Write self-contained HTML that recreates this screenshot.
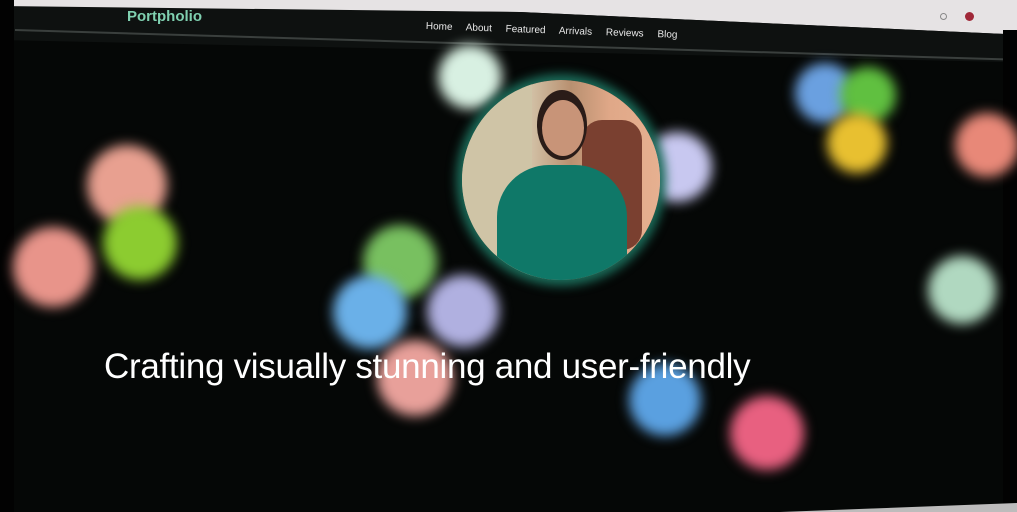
<!DOCTYPE html>
<html><head><style>
html,body{margin:0;padding:0;width:1017px;height:512px;overflow:hidden;background:#050706;font-family:"Liberation Sans",sans-serif}
.strip{position:absolute;left:0;top:0;width:1017px;height:40px;background:#e6e3e4;clip-path:polygon(200px 0,1017px 0,1017px 34px,1005px 34px,520px 12px,0 8px,0 0)}
.hdr{position:absolute;left:0;top:0;width:1017px;height:64px;background:#0e1110;clip-path:polygon(0 6px,520px 12px,1005px 34px,1005px 62px,0 40px)}
.line{position:absolute;left:15px;top:29px;width:990px;height:2px;background:#3a3f3d;transform-origin:0 0;transform:rotate(1.7deg)}
.logo{position:absolute;left:127px;top:8px;color:#7fd0b0;font-weight:bold;font-size:15px}
.nav{position:absolute;left:426px;top:21px;color:#e8e8e8;font-size:10px;transform:rotate(2deg);transform-origin:0 0;word-spacing:11px}
.b{position:absolute;border-radius:50%;filter:blur(6px)}
.av{position:absolute;left:462px;top:80px;width:198px;height:200px;border-radius:50%;overflow:hidden;box-shadow:0 0 10px 6px #1b6a58;background:linear-gradient(90deg,#cfc2a8 0,#d8ccb2 30%,#b89070 55%,#e0a888 75%,#e6b090 100%)}
.h1{position:absolute;left:104px;top:347px;color:#fff;font-size:35px;letter-spacing:-0.3px}
</style></head><body>
<div class="strip"></div>
<div class="hdr"></div>
<div class="line"></div>
<div class="logo">Portpholio</div>
<div class="nav">Home About Featured Arrivals Reviews Blog</div>
<div style="position:absolute;left:965px;top:12px;width:9px;height:9px;border-radius:50%;background:#a02838"></div>
<div style="position:absolute;left:940px;top:13px;width:5px;height:5px;border-radius:50%;border:1px solid #888"></div>
<div style="position:absolute;left:0;top:0;width:14px;height:512px;background:#020202"></div>
<div style="position:absolute;left:1003px;top:30px;width:14px;height:482px;background:#020202"></div>
<div style="position:absolute;left:780px;top:503px;width:237px;height:9px;background:#bdbcbc;clip-path:polygon(0 100%,100% 0,100% 100%)"></div>

<div class="b" style="left:438px;top:45px;width:64px;height:64px;background:#d8f0e2"></div>
<div class="b" style="left:87px;top:145px;width:80px;height:80px;background:#e8a090"></div>
<div class="b" style="left:103px;top:206px;width:74px;height:74px;background:#8ccc30"></div>
<div class="b" style="left:13px;top:227px;width:80px;height:80px;background:#e8948a"></div>
<div class="b" style="left:363px;top:225px;width:74px;height:74px;background:#78c060"></div>
<div class="b" style="left:333px;top:275px;width:74px;height:74px;background:#6ab0e8"></div>
<div class="b" style="left:427px;top:275px;width:72px;height:72px;background:#b0b0e0"></div>
<div class="b" style="left:377px;top:340px;width:76px;height:76px;background:#e8a09a"></div>
<div class="b" style="left:629px;top:364px;width:72px;height:72px;background:#5aa0e0"></div>
<div class="b" style="left:730px;top:396px;width:74px;height:74px;background:#e86080"></div>
<div class="b" style="left:642px;top:132px;width:70px;height:70px;background:#c8c8f0"></div>
<div class="b" style="left:795px;top:63px;width:60px;height:60px;background:#6aa0e0"></div>
<div class="b" style="left:840px;top:67px;width:56px;height:56px;background:#60c040"></div>
<div class="b" style="left:827px;top:113px;width:60px;height:60px;background:#e8c030"></div>
<div class="b" style="left:955px;top:113px;width:64px;height:64px;background:#e88878"></div>
<div class="b" style="left:928px;top:256px;width:68px;height:68px;background:#b0d8c0"></div>

<div class="av">
 <div style="position:absolute;left:0;top:0;width:70px;height:200px;background:#cfc4a6"></div>
 <div style="position:absolute;left:120px;top:40px;width:60px;height:130px;background:#7a4030;border-radius:20px"></div>
 <div style="position:absolute;left:75px;top:10px;width:50px;height:70px;border-radius:50%;background:#2a1c18"></div>
 <div style="position:absolute;left:80px;top:20px;width:42px;height:56px;border-radius:50%;background:#c89478"></div>
 <div style="position:absolute;left:35px;top:85px;width:130px;height:130px;border-radius:40% 40% 0 0;background:#0f7868"></div>
</div>

<div class="h1">Crafting visually stunning and user-friendly</div>
</body></html>
